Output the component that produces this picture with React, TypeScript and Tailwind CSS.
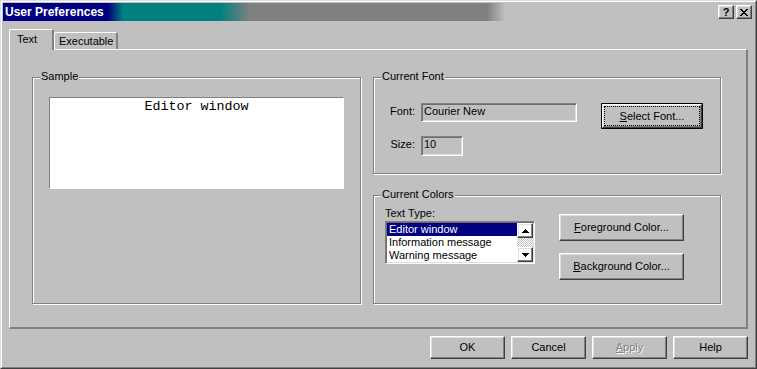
import React from "react";

const raised =
  "border border-t-white border-l-white border-r-[#404040] border-b-[#404040] shadow-[inset_-1px_-1px_0_#808080,inset_1px_1px_0_#dfdfdf]";
const sunken =
  "border border-t-[#808080] border-l-[#808080] border-r-white border-b-white shadow-[inset_1px_1px_0_#6e6e6e,inset_-1px_-1px_0_#dfdfdf]";
const etched = "relative border border-[#808080] shadow-[1px_1px_0_#fff,inset_1px_1px_0_#fff]";

function GroupLabel({ text }: { text: string }) {
  return <span className="absolute left-[7px] top-[-8px] bg-[#c0c0c0] px-[1px] leading-[13px]">{text}</span>;
}

function Arrow({ down }: { down?: boolean }) {
  const rows = down ? [7, 5, 3, 1] : [1, 3, 5, 7];
  return (
    <svg width="7" height="4" viewBox="0 0 7 4" shapeRendering="crispEdges">
      {rows.map((w, i) => (
        <rect key={i} x={(7 - w) / 2} y={i} width={w} height={1} fill="#000" />
      ))}
    </svg>
  );
}

function CloseGlyph() {
  const rows = [
    [0, 1, 6, 7],
    [1, 2, 5, 6],
    [2, 3, 4, 5],
    [3, 4],
    [2, 3, 4, 5],
    [1, 2, 5, 6],
    [0, 1, 6, 7],
  ];
  return (
    <svg width="8" height="7" viewBox="0 0 8 7" shapeRendering="crispEdges">
      {rows.map((cols, y) => cols.map((x) => <rect key={`${y}-${x}`} x={x} y={y} width={1} height={1} fill="#000" />))}
    </svg>
  );
}

function DlgButton({ children, disabled }: { children: React.ReactNode; disabled?: boolean }) {
  return (
    <div
      className={`${raised} w-[75px] h-[23px] flex items-center justify-center ${
        disabled ? "text-[#808080] [text-shadow:1px_1px_0_#fff]" : ""
      }`}
    >
      {children}
    </div>
  );
}

export default function App() {
  const items = ["Editor window", "Information message", "Warning message"];

  return (
    <div className="w-[757px] h-[369px] bg-[#c0c0c0] border border-t-[#dfdfdf] border-l-[#dfdfdf] border-r-[#404040] border-b-[#404040] font-['Liberation_Sans',Arial,sans-serif] text-[11px] leading-[13px] text-black select-none">
      <div className="h-full border border-t-white border-l-white border-r-[#808080] border-b-[#808080] p-[1px] flex flex-col">
        {/* title bar */}
        <div className="h-[18px] flex items-center pl-[2px] bg-[linear-gradient(to_right,#000080_0px,#000080_105px,#008080_120px,#008080_217px,#808080_247px,#808080_484px,#c0c0c0_502px)]">
          <span className="text-white font-bold text-[12px] leading-[14px]">User Preferences</span>
          <div className="ml-auto mr-[2px] flex gap-[2px]">
            <div className={`${raised} w-[16px] h-[14px] flex items-center justify-center font-bold text-[11px] leading-[11px]`}>?</div>
            <div className={`${raised} w-[16px] h-[14px] flex items-center justify-center`}>
              <CloseGlyph />
            </div>
          </div>
        </div>

        {/* tabs */}
        <div className="mt-[8px] mx-[6px] h-[20px] flex items-end relative z-10">
          <div className="h-[21px] w-[45px] -mb-px bg-[#c0c0c0] border-l border-t border-white border-r-2 border-r-[#808080] rounded-t-[2px] pl-[7px] pt-[3px]">
            Text
          </div>
          <div className="h-[17px] w-[64px] border-l border-t border-white border-r-2 border-r-[#808080] rounded-t-[2px] pl-[4px] pt-[2px]">
            Executable
          </div>
        </div>

        {/* tab panel */}
        <div className="mx-[6px] h-[280px] border-l border-t border-white border-r-2 border-b-2 border-r-[#808080] border-b-[#808080] flex pl-[22px] pt-[27px] gap-[12px]">
          <div className={`${etched} w-[329px] h-[227px] pl-[16px] pt-[19px]`}>
            <GroupLabel text="Sample" />
            <div className="w-[295px] h-[92px] bg-white border border-t-[#808080] border-l-[#808080] border-r-white border-b-white text-center font-['Liberation_Mono','Courier_New',monospace] text-[13.33px] leading-[15px] pt-[1px]">
              Editor window
            </div>
          </div>

          <div className="w-[348px] flex flex-col gap-[21px]">
            <div className={`${etched} h-[97px] flex pl-[12px] pt-[25px]`}>
              <GroupLabel text="Current Font" />
              <div className="flex flex-col gap-[14px]">
                <div className="flex">
                  <span className="w-[29px] text-right pt-[2px]">Font:</span>
                  <div className={`${sunken} ml-[6px] w-[156px] h-[19px] pl-[2px] pt-[1px]`}>Courier New</div>
                </div>
                <div className="flex">
                  <span className="w-[29px] text-right pt-[2px]">Size:</span>
                  <div className={`${sunken} ml-[6px] w-[42px] h-[20px] pl-[2px] pt-[1px]`}>10</div>
                </div>
              </div>
              <div className="ml-[24px] w-[102px] h-[26px] border border-black">
                <div className={`${raised} h-full p-[1px]`}>
                  <div className="h-full border border-dotted border-black flex items-center justify-center">
                    <span>
                      <u>S</u>elect Font...
                    </span>
                  </div>
                </div>
              </div>
            </div>

            <div className={`${etched} h-[109px] flex pl-[11px] pt-[11px]`}>
              <GroupLabel text="Current Colors" />
              <div className="flex flex-col">
                <span>Text Type:</span>
                <div className={`${sunken} mt-[1px] w-[150px] h-[43px] p-[1px] bg-white flex`}>
                  <div className="flex-1 flex flex-col">
                    {items.map((t, i) => (
                      <div key={t} className={`h-[13px] pl-[2px] ${i === 0 ? "bg-[#000080] text-white" : ""}`}>
                        {t}
                      </div>
                    ))}
                  </div>
                  <div className="w-[16px] flex flex-col">
                    <div className={`${raised} h-[15px] flex items-center justify-center`}>
                      <Arrow />
                    </div>
                    <div className="flex-1 bg-[repeating-conic-gradient(#c0c0c0_0%_25%,#ffffff_0%_50%)] bg-[length:2px_2px]" />
                    <div className={`${raised} h-[15px] flex items-center justify-center`}>
                      <Arrow down />
                    </div>
                  </div>
                </div>
              </div>
              <div className="ml-[24px] mt-[7px] flex flex-col gap-[12px]">
                <div className={`${raised} w-[125px] h-[27px] flex items-center justify-center`}>
                  <span>
                    <u>F</u>oreground Color...
                  </span>
                </div>
                <div className={`${raised} w-[125px] h-[27px] flex items-center justify-center`}>
                  <span>
                    <u>B</u>ackground Color...
                  </span>
                </div>
              </div>
            </div>
          </div>
        </div>

        {/* dialog buttons */}
        <div className="mt-[7px] pr-[6px] flex justify-end gap-[6px]">
          <DlgButton>OK</DlgButton>
          <DlgButton>Cancel</DlgButton>
          <DlgButton disabled>
            <span>
              <u>A</u>pply
            </span>
          </DlgButton>
          <DlgButton>Help</DlgButton>
        </div>
      </div>
    </div>
  );
}
